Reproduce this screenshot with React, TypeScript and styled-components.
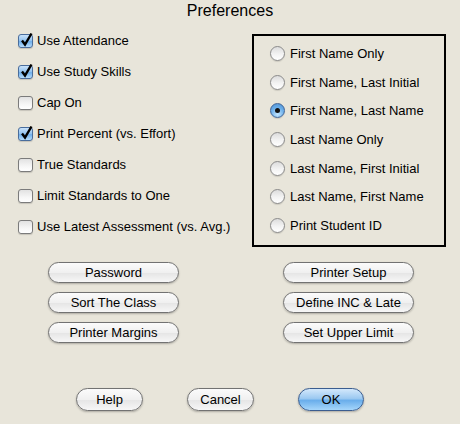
import styled, { createGlobalStyle } from 'styled-components';

const GlobalStyle = createGlobalStyle`
    html, body {
        margin: 0;
        padding: 0;
        background: #e8e5da;
    }
`

const Window = styled.div`
    width: 460px;
    height: 424px;
    background: #e8e5da;
    font-family: 'Liberation Sans', Arial, sans-serif;
    font-size: 13px;
    color: #000;
    overflow: hidden;
`

const Title = styled.div`
    height: 20px;
    line-height: 21px;
    text-align: center;
    font-size: 16px;
`

const Top = styled.div`
    display: flex;
    height: 242px;
`

const CheckList = styled.div`
    width: 234px;
    padding: 5px 0 0 18px;
`

const CheckRow = styled.label`
    display: flex;
    align-items: center;
    gap: 4px;
    height: 31px;
`

const Box = styled.span<{ $on?: boolean }>`
    display: inline-flex;
    align-items: center;
    justify-content: center;
    box-sizing: border-box;
    width: 15px;
    height: 14px;
    border: 1px solid ${p => (p.$on ? '#4a6d9c' : '#7b7b7b')};
    border-radius: 3px;
    background: ${p =>
        p.$on
            ? 'linear-gradient(#c9e2fa 0%, #8fc0ee 50%, #6eaeea 55%, #b6dcfb 100%)'
            : 'linear-gradient(#e2e2e2 0%, #f6f6f6 60%, #ffffff 100%)'};
    box-shadow: 0 1px 1px rgba(0, 0, 0, 0.15);
    position: relative;

    svg {
        position: absolute;
        left: 1px;
        top: -3px;
    }
`

const RadioBox = styled.div`
    box-sizing: border-box;
    width: 194px;
    height: 213px;
    margin-top: 14px;
    border: 2px solid #000;
    padding: 3px 0 0 16px;
`

const RadioRow = styled.label`
    display: flex;
    align-items: center;
    gap: 5px;
    height: 28.7px;
`

const Dot = styled.span<{ $on?: boolean }>`
    display: inline-flex;
    align-items: center;
    justify-content: center;
    box-sizing: border-box;
    width: 15px;
    height: 15px;
    border-radius: 50%;
    border: 1px solid ${p => (p.$on ? '#3f6497' : '#8a8a8a')};
    background: ${p =>
        p.$on
            ? 'radial-gradient(circle at 50% 80%, #c4e6ff 0%, #6aaeea 55%, #4f8fd0 100%)'
            : 'linear-gradient(#dcdcdc 0%, #f3f3f3 55%, #ffffff 100%)'};
    box-shadow: 0 1px 1px rgba(0, 0, 0, 0.12);

    &::after {
        content: '';
        display: ${p => (p.$on ? 'block' : 'none')};
        width: 5px;
        height: 5px;
        border-radius: 50%;
        background: #111;
    }
`

const ButtonGrid = styled.div`
    display: grid;
    grid-template-columns: 131px 131px;
    column-gap: 104px;
    row-gap: 9px;
    padding-left: 48px;
`

const PillButton = styled.button<{ $primary?: boolean; $w?: number; $h?: number }>`
    box-sizing: border-box;
    width: ${p => p.$w ?? 131}px;
    height: ${p => p.$h ?? 21}px;
    padding: 0;
    font-family: inherit;
    font-size: 13px;
    color: #000;
    border: 1px solid ${p => (p.$primary ? '#3b5d8f' : '#727272')};
    border-radius: 12px;
    background: ${p =>
        p.$primary
            ? 'linear-gradient(#d3e8fb 0%, #9cc9f1 45%, #6aaeeb 55%, #a6d6fb 100%)'
            : 'linear-gradient(#fbfbfb 0%, #f0f0f0 50%, #e6e6e6 55%, #f7f7f7 100%)'};
    box-shadow: 0 1px 2px rgba(0, 0, 0, 0.25);
    cursor: pointer;
`

const Footer = styled.div`
    display: flex;
    gap: 44px;
    margin-top: 45px;
    padding-left: 76px;
`

function Check() {
    return (
        <svg width="14" height="15" viewBox="0 0 14 15">
            <path d="M2 8.5 L5 12.5 L11.5 1.5" fill="none" stroke="#000" strokeWidth="2.4" strokeLinejoin="miter" />
        </svg>
    )
}

const checks: [string, boolean][] = [
    ['Use Attendance', true],
    ['Use Study Skills', true],
    ['Cap On', false],
    ['Print Percent (vs. Effort)', true],
    ['True Standards', false],
    ['Limit Standards to One', false],
    ['Use Latest Assessment (vs. Avg.)', false],
]

const names = [
    'First Name Only',
    'First Name, Last Initial',
    'First Name, Last Name',
    'Last Name Only',
    'Last Name, First Initial',
    'Last Name, First Name',
    'Print Student ID',
]

const buttons = ['Password', 'Printer Setup', 'Sort The Class', 'Define INC & Late', 'Printer Margins', 'Set Upper Limit']

export default function App() {
    return (
        <Window>
            <GlobalStyle />
            <Title>Preferences</Title>
            <Top>
                <CheckList>
                    {checks.map(([label, on]) => (
                        <CheckRow key={label}>
                            <Box $on={on}>{on && <Check />}</Box>
                            {label}
                        </CheckRow>
                    ))}
                </CheckList>
                <RadioBox>
                    {names.map((n, i) => (
                        <RadioRow key={n}>
                            <Dot $on={i === 2} />
                            {n}
                        </RadioRow>
                    ))}
                </RadioBox>
            </Top>
            <ButtonGrid>
                {buttons.map(b => (
                    <PillButton key={b}>{b}</PillButton>
                ))}
            </ButtonGrid>
            <Footer>
                <PillButton $w={67} $h={23}>Help</PillButton>
                <PillButton $w={67} $h={23}>Cancel</PillButton>
                <PillButton $w={66} $h={23} $primary>OK</PillButton>
            </Footer>
        </Window>
    )
}
